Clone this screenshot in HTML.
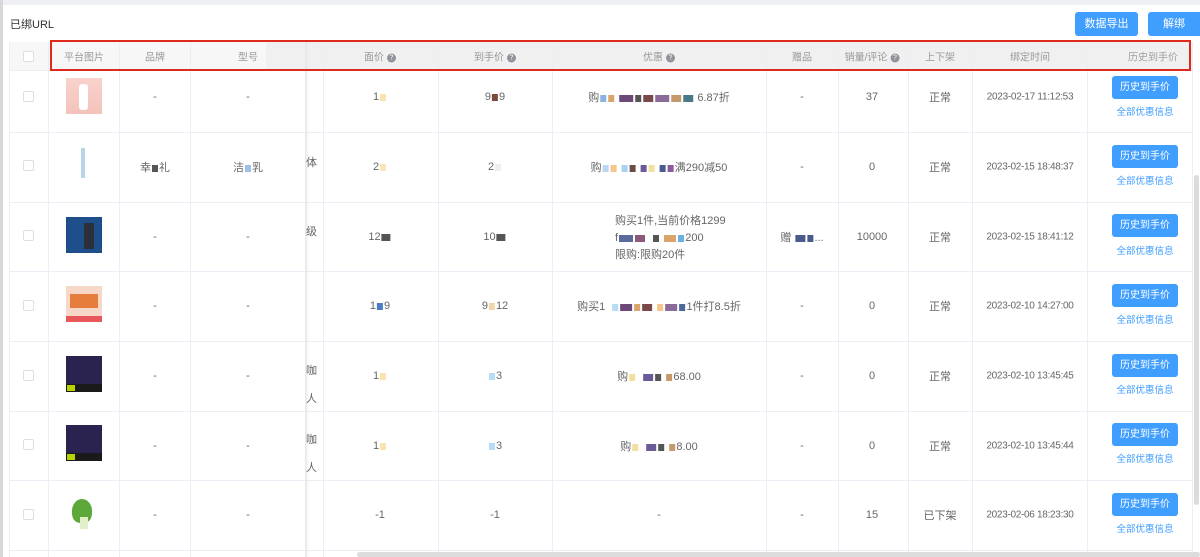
<!DOCTYPE html>
<html><head><meta charset="utf-8">
<style>
*{margin:0;padding:0;box-sizing:border-box}
body{width:1200px;height:557px;overflow:hidden;background:#fff;position:relative;font-family:"Liberation Sans","Noto Sans CJK SC",sans-serif;font-size:11px;color:#666}
.a{position:absolute}
.t{position:absolute;transform:translate(-50%,-50%);white-space:nowrap;font-size:11px;color:#666}
.d{font-size:10px;letter-spacing:-0.3px}
.h{position:absolute;left:10px;width:1182px;height:1px;background:#ebeef5}
.v{position:absolute;top:42px;width:1px;height:515px;background:#ebeef5}
.cb{position:absolute;left:23px;width:11px;height:11px;border:1px solid #dcdfe6;border-radius:2px;background:#fff}
.btn{position:absolute;left:1112px;width:66px;height:23px;background:#409eff;border-radius:3px;color:#fff;font-size:10px;text-align:center;line-height:23px}
.lk{position:absolute;left:1145px;transform:translateX(-50%);color:#409eff;font-size:9.5px;white-space:nowrap}
.q{display:inline-block;width:9px;height:9px;border-radius:50%;background:#909399;color:#fff;font-size:7px;line-height:9px;text-align:center;vertical-align:middle;margin-left:3px}
.p{display:inline-block;width:6px;height:7px;vertical-align:middle;margin:0 1px}
.img{position:absolute;left:66px;width:36px;height:36px}
.hd{position:absolute;top:56px;transform:translate(-50%,-50%);white-space:nowrap;color:#999;font-size:10px}
</style></head><body>
<div class="a" style="left:0;top:0;width:1200px;height:5px;background:#eef0f3"></div>
<div class="a" style="left:0;top:0;width:3px;height:557px;background:#d8d8d8"></div>
<div class="a" style="left:10px;top:16px;font-size:11px;color:#303133">已绑URL</div>
<div class="a" style="left:1075px;top:12px;width:63px;height:24px;background:#409eff;border-radius:3px;color:#fff;text-align:center;line-height:24px;font-size:11px">数据导出</div>
<div class="a" style="left:1148px;top:12px;width:52px;height:24px;background:#409eff;border-radius:3px 0 0 3px;color:#fff;text-align:center;line-height:24px;font-size:11px">解绑</div>

<div class="a" style="left:10px;top:42px;width:1182px;height:28px;background:#f0f0f0"></div>
<div class="a" style="left:10px;top:42px;width:256px;height:28px;background:#f7f7f7"></div>

<div class="h" style="top:70px"></div>
<div class="h" style="top:132px"></div><div class="h" style="top:202px"></div><div class="h" style="top:271px"></div><div class="h" style="top:341px"></div><div class="h" style="top:411px"></div><div class="h" style="top:480px"></div><div class="h" style="top:550px"></div>
<div class="v" style="left:9px"></div><div class="v" style="left:48px"></div><div class="v" style="left:119px"></div><div class="v" style="left:190px"></div>
<div class="v" style="left:323px"></div><div class="v" style="left:438px"></div><div class="v" style="left:552px"></div><div class="v" style="left:766px"></div><div class="v" style="left:838px"></div><div class="v" style="left:908px"></div><div class="v" style="left:972px"></div><div class="v" style="left:1087px"></div><div class="v" style="left:1192px"></div>
<div class="a" style="left:305px;top:42px;width:4px;height:515px;background:linear-gradient(90deg,#e6e6e6,rgba(255,255,255,0))"></div>

<div class="cb" style="top:51px"></div>
<div class="hd" style="left:84px">平台图片</div>
<div class="hd" style="left:155px">品牌</div>
<div class="hd" style="left:248px">型号</div>
<div class="hd" style="left:380px">面价<span class="q">?</span></div>
<div class="hd" style="left:495px">到手价<span class="q">?</span></div>
<div class="hd" style="left:659px">优惠<span class="q">?</span></div>
<div class="hd" style="left:802px">赠品</div>
<div class="hd" style="left:872px">销量/评论<span class="q">?</span></div>
<div class="hd" style="left:940px">上下架</div>
<div class="hd" style="left:1030px">绑定时间</div>
<div class="hd" style="left:1153px;color:#a0a0a0">历史到手价</div>
<div class="a" style="left:50px;top:40px;width:1141px;height:31px;border:2px solid #e0291d"></div>

<div class="cb" style="top:91px"></div><div class="cb" style="top:160px"></div><div class="cb" style="top:230px"></div><div class="cb" style="top:300px"></div><div class="cb" style="top:370px"></div><div class="cb" style="top:439px"></div><div class="cb" style="top:509px"></div>

<div class="img" style="top:78px;background:linear-gradient(#f8d2cc,#f4c3bb)"><div class="a" style="left:13px;top:6px;width:9px;height:26px;background:#fff;border-radius:3px"></div></div>
<div class="img" style="top:148px"><div class="a" style="left:15px;top:0;width:4px;height:30px;background:#b8d4e6"></div></div>
<div class="img" style="top:217px;background:#1f4f8a"><div class="a" style="left:18px;top:6px;width:10px;height:26px;background:#2a2f3a"></div></div>
<div class="img" style="top:286px;background:#f7d7c8"><div class="a" style="left:4px;top:8px;width:28px;height:14px;background:#e67d3d"></div><div class="a" style="left:0;top:30px;width:36px;height:6px;background:#e8575a"></div></div>
<div class="img" style="top:356px;background:#2a2350"><div class="a" style="left:0;top:28px;width:36px;height:8px;background:#1a1a1a"></div><div class="a" style="left:1px;top:29px;width:8px;height:6px;background:#b7d400"></div></div>
<div class="img" style="top:425px;background:#2a2350"><div class="a" style="left:0;top:28px;width:36px;height:8px;background:#1a1a1a"></div><div class="a" style="left:1px;top:29px;width:8px;height:6px;background:#b7d400"></div></div>
<div class="img" style="top:495px"><div class="a" style="left:6px;top:4px;width:20px;height:24px;background:#5da83a;border-radius:50% 50% 40% 40%"></div><div class="a" style="left:14px;top:22px;width:8px;height:12px;background:#e0efc8"></div></div>

<div class="t" style="left:155px;top:97px">-</div><div class="t" style="left:248px;top:97px">-</div>
<div class="t" style="left:155px;top:167px">幸<span class="p" style="background:#555"></span>礼</div><div class="t" style="left:248px;top:167px">洁<span class="p" style="background:#9cc0e8"></span>乳</div>
<div class="t" style="left:155px;top:237px">-</div><div class="t" style="left:248px;top:237px">-</div>
<div class="t" style="left:155px;top:306px">-</div><div class="t" style="left:248px;top:306px">-</div>
<div class="t" style="left:155px;top:376px">-</div><div class="t" style="left:248px;top:376px">-</div>
<div class="t" style="left:155px;top:446px">-</div><div class="t" style="left:248px;top:446px">-</div>
<div class="t" style="left:155px;top:515px">-</div><div class="t" style="left:248px;top:515px">-</div>
<div class="a" style="left:306px;top:154px">体</div>
<div class="a" style="left:306px;top:223px">级</div>
<div class="a" style="left:306px;top:362px">咖<br><br>人</div>
<div class="a" style="left:306px;top:431px">咖<br><br>人</div>

<div class="t" style="left:380px;top:97px">1<span class="p" style="background:#fbe3b0"></span></div><div class="t" style="left:495px;top:97px">9<span class="p" style="background:#7a4a3a"></span>9</div>
<div class="t" style="left:380px;top:167px">2<span class="p" style="background:#fae6b4"></span></div><div class="t" style="left:495px;top:167px">2<span class="p" style="background:#eee"></span></div>
<div class="t" style="left:380px;top:237px">12<span class="p" style="background:#555;width:9px"></span></div><div class="t" style="left:495px;top:237px">10<span class="p" style="background:#555;width:9px"></span></div>
<div class="t" style="left:380px;top:306px">1<span class="p" style="background:#4a7dc4"></span>9</div><div class="t" style="left:495px;top:306px">9<span class="p" style="background:#f0d7a8"></span>12</div>
<div class="t" style="left:380px;top:376px">1<span class="p" style="background:#fbe3b0"></span></div><div class="t" style="left:495px;top:376px"><span class="p" style="background:#b7dcf5"></span>3</div>
<div class="t" style="left:380px;top:446px">1<span class="p" style="background:#fbe3b0"></span></div><div class="t" style="left:495px;top:446px"><span class="p" style="background:#b7dcf5"></span>3</div>
<div class="t" style="left:380px;top:515px">-1</div><div class="t" style="left:495px;top:515px">-1</div>

<div class="t" style="left:659px;top:97px">购<span class="p" style="background:#8ab4e0"></span><span class="p" style="background:#d9a56b"></span>&nbsp;<span class="p" style="background:#6b4a7a;width:14px"></span><span class="p" style="background:#555"></span><span class="p" style="background:#7a4a4a;width:10px"></span><span class="p" style="background:#8a6b9a;width:14px"></span><span class="p" style="background:#c49a6a;width:10px"></span><span class="p" style="background:#4a7a8a;width:10px"></span>&nbsp;6.87折</div>
<div class="t" style="left:659px;top:167px">购<span class="p" style="background:#bcd6f0"></span><span class="p" style="background:#f5c58a"></span>&nbsp;<span class="p" style="background:#a8d0f0"></span><span class="p" style="background:#6b4a4a"></span>&nbsp;<span class="p" style="background:#6b5a9a"></span><span class="p" style="background:#f5dfa0"></span>&nbsp;<span class="p" style="background:#4a5a8a"></span><span class="p" style="background:#8a5a9a"></span>满290减50</div>
<div class="a" style="left:615px;top:213px;line-height:17px">购买1件,当前价格1299<br>f<span class="p" style="background:#5a6a9a;width:14px"></span><span class="p" style="background:#8a5a7a;width:10px"></span>&nbsp;&nbsp;<span class="p" style="background:#555"></span>&nbsp;<span class="p" style="background:#d9a56b;width:12px"></span><span class="p" style="background:#6ab0e0"></span>200<br>限购:限购20件</div>
<div class="t" style="left:659px;top:306px">购买1&nbsp;&nbsp;<span class="p" style="background:#b7dcf5"></span><span class="p" style="background:#6b4a7a;width:12px"></span><span class="p" style="background:#d9a56b"></span><span class="p" style="background:#7a4a4a;width:10px"></span>&nbsp;<span class="p" style="background:#f5c58a"></span><span class="p" style="background:#8a6b9a;width:12px"></span><span class="p" style="background:#4a6a9a"></span>1件打8.5折</div>
<div class="t" style="left:659px;top:376px">购<span class="p" style="background:#f5dfa0"></span>&nbsp;&nbsp;<span class="p" style="background:#6b5a9a;width:10px"></span><span class="p" style="background:#555"></span>&nbsp;<span class="p" style="background:#c49a6a"></span>68.00</div>
<div class="t" style="left:659px;top:446px">购<span class="p" style="background:#f5dfa0"></span>&nbsp;&nbsp;<span class="p" style="background:#6b5a9a;width:10px"></span><span class="p" style="background:#555"></span>&nbsp;<span class="p" style="background:#c49a6a"></span>8.00</div>
<div class="t" style="left:659px;top:515px">-</div>

<div class="t" style="left:802px;top:97px">-</div><div class="t" style="left:872px;top:97px">37</div><div class="t" style="left:940px;top:97px">正常</div><div class="t d" style="left:1030px;top:97px">2023-02-17 11:12:53</div>
<div class="t" style="left:802px;top:167px">-</div><div class="t" style="left:872px;top:167px">0</div><div class="t" style="left:940px;top:167px">正常</div><div class="t d" style="left:1030px;top:167px">2023-02-15 18:48:37</div>
<div class="t" style="left:802px;top:237px">赠&nbsp;<span class="p" style="background:#4a5a8a;width:10px"></span><span class="p" style="background:#4a5a8a"></span>...</div><div class="t" style="left:872px;top:237px">10000</div><div class="t" style="left:940px;top:237px">正常</div><div class="t d" style="left:1030px;top:237px">2023-02-15 18:41:12</div>
<div class="t" style="left:802px;top:306px">-</div><div class="t" style="left:872px;top:306px">0</div><div class="t" style="left:940px;top:306px">正常</div><div class="t d" style="left:1030px;top:306px">2023-02-10 14:27:00</div>
<div class="t" style="left:802px;top:376px">-</div><div class="t" style="left:872px;top:376px">0</div><div class="t" style="left:940px;top:376px">正常</div><div class="t d" style="left:1030px;top:376px">2023-02-10 13:45:45</div>
<div class="t" style="left:802px;top:446px">-</div><div class="t" style="left:872px;top:446px">0</div><div class="t" style="left:940px;top:446px">正常</div><div class="t d" style="left:1030px;top:446px">2023-02-10 13:45:44</div>
<div class="t" style="left:802px;top:515px">-</div><div class="t" style="left:872px;top:515px">15</div><div class="t" style="left:940px;top:515px">已下架</div><div class="t d" style="left:1030px;top:515px">2023-02-06 18:23:30</div>

<div class="btn" style="top:76px">历史到手价</div><div class="lk" style="top:104px">全部优惠信息</div>
<div class="btn" style="top:145px">历史到手价</div><div class="lk" style="top:173px">全部优惠信息</div>
<div class="btn" style="top:214px">历史到手价</div><div class="lk" style="top:243px">全部优惠信息</div>
<div class="btn" style="top:284px">历史到手价</div><div class="lk" style="top:312px">全部优惠信息</div>
<div class="btn" style="top:354px">历史到手价</div><div class="lk" style="top:382px">全部优惠信息</div>
<div class="btn" style="top:423px">历史到手价</div><div class="lk" style="top:451px">全部优惠信息</div>
<div class="btn" style="top:493px">历史到手价</div><div class="lk" style="top:521px">全部优惠信息</div>

<div class="a" style="left:1194px;top:175px;width:5px;height:330px;background:#dcdcdc;border-radius:3px"></div>
<div class="a" style="left:357px;top:552px;width:843px;height:5px;background:#dcdcdc;border-radius:3px"></div>
</body></html>
